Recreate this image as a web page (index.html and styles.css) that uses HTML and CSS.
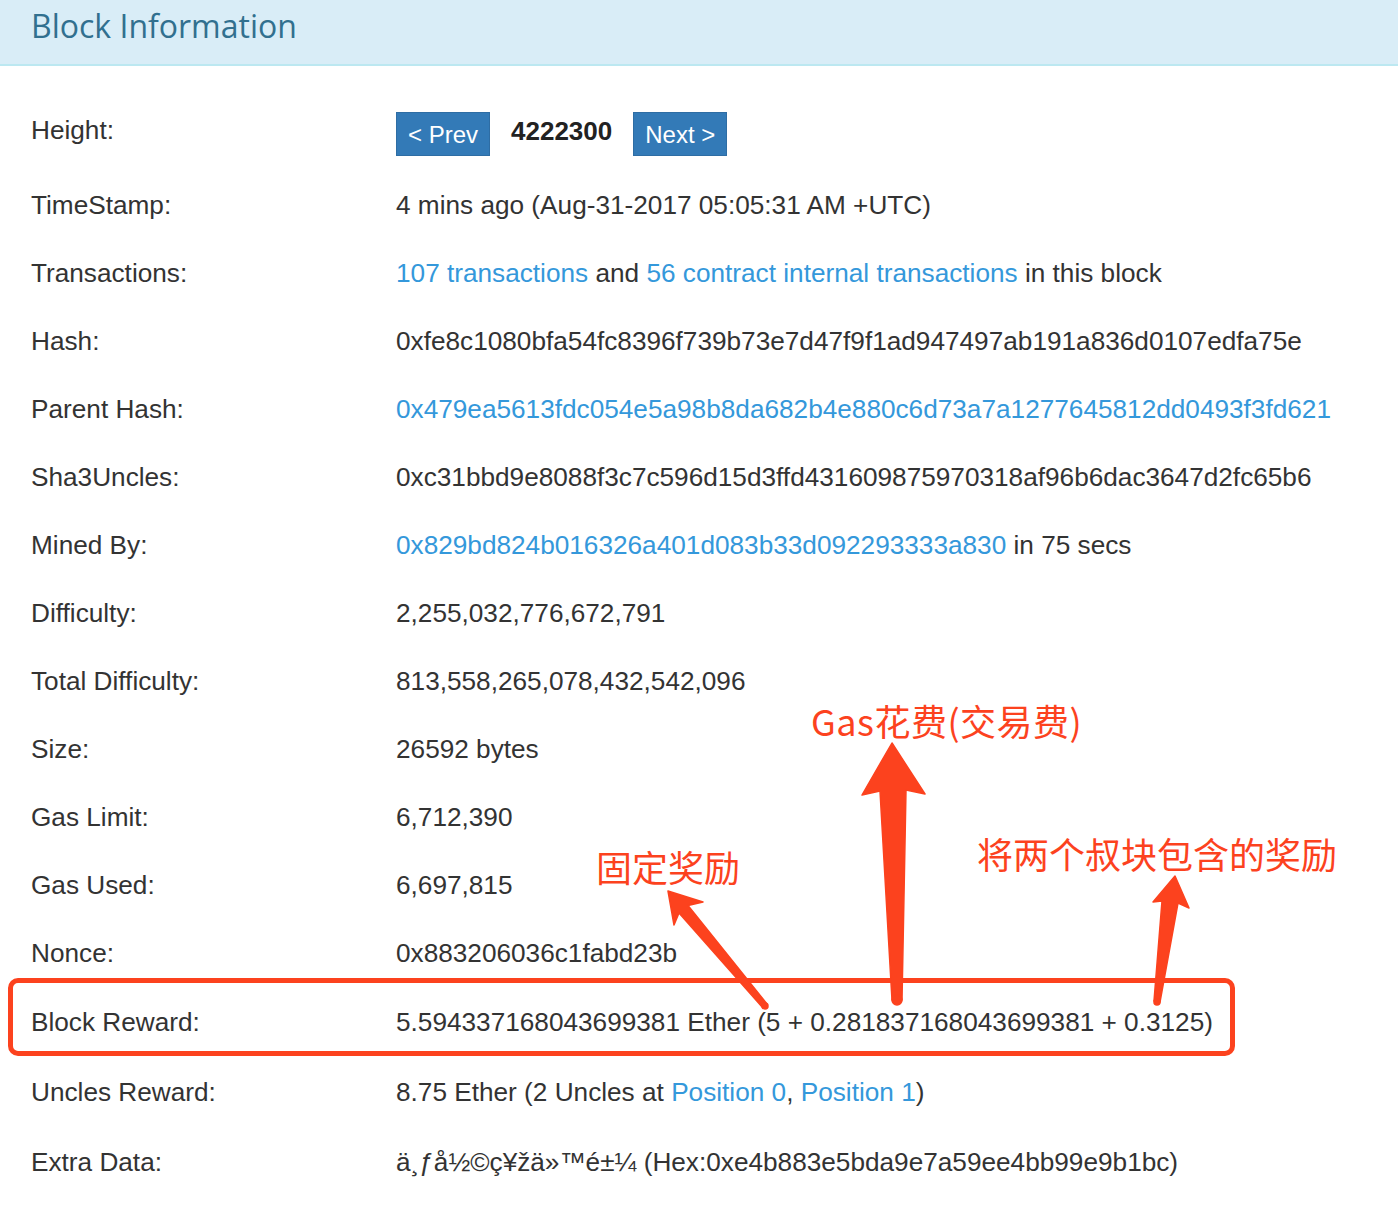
FILE: index.html
```html
<!DOCTYPE html>
<html lang="zh">
<head>
<meta charset="utf-8">
<title>Block Information</title>
<link rel="stylesheet" href="styles.css">
</head>
<body>
<div class="page">
  <div class="panel-heading">
    <h3 class="panel-title">Block Information</h3>
  </div>
  <div class="rows">
    <div class="row row-height">
      <div class="label">Height:</div>
      <div class="value nav">
        <a class="btn">&lt; Prev</a>
        <span class="blocknum">4222300</span>
        <a class="btn">Next &gt;</a>
      </div>
    </div>
    <div class="row"><div class="label">TimeStamp:</div><div class="value">4 mins ago (Aug-31-2017 05:05:31 AM +UTC)</div></div>
    <div class="row"><div class="label">Transactions:</div><div class="value"><a class="link">107 transactions</a> and <a class="link">56 contract internal transactions</a> in this block</div></div>
    <div class="row"><div class="label">Hash:</div><div class="value">0xfe8c1080bfa54fc8396f739b73e7d47f9f1ad947497ab191a836d0107edfa75e</div></div>
    <div class="row"><div class="label">Parent Hash:</div><div class="value"><a class="link">0x479ea5613fdc054e5a98b8da682b4e880c6d73a7a1277645812dd0493f3fd621</a></div></div>
    <div class="row"><div class="label">Sha3Uncles:</div><div class="value">0xc31bbd9e8088f3c7c596d15d3ffd431609875970318af96b6dac3647d2fc65b6</div></div>
    <div class="row"><div class="label">Mined By:</div><div class="value"><a class="link">0x829bd824b016326a401d083b33d092293333a830</a> in 75 secs</div></div>
    <div class="row"><div class="label">Difficulty:</div><div class="value">2,255,032,776,672,791</div></div>
    <div class="row"><div class="label">Total Difficulty:</div><div class="value">813,558,265,078,432,542,096</div></div>
    <div class="row"><div class="label">Size:</div><div class="value">26592 bytes</div></div>
    <div class="row"><div class="label">Gas Limit:</div><div class="value">6,712,390</div></div>
    <div class="row"><div class="label">Gas Used:</div><div class="value">6,697,815</div></div>
    <div class="row"><div class="label">Nonce:</div><div class="value">0x883206036c1fabd23b</div></div>
    <div class="row row-69"><div class="label">Block Reward:</div><div class="value">5.594337168043699381 Ether (5 + 0.281837168043699381 + 0.3125)</div></div>
    <div class="row row-71"><div class="label">Uncles Reward:</div><div class="value">8.75 Ether (2 Uncles at <a class="link">Position 0</a>, <a class="link">Position 1</a>)</div></div>
    <div class="row row-69"><div class="label">Extra Data:</div><div class="value">ä¸ƒå½©ç¥žä»™é±¼ (Hex:0xe4b883e5bda9e7a59ee4bb99e9b1bc)</div></div>
  </div>

  <div class="annotations">
    <div class="highlight-box"></div>
    <svg class="arrows" width="1398" height="1206" viewBox="0 0 1398 1206" xmlns="http://www.w3.org/2000/svg">
      <g fill="#fc421e" stroke="#fc421e" stroke-width="1.5" stroke-linejoin="round">
        <polygon points="668,891 703,902 688,905.5 767,1004 763,1008 679,913 674,925"/>
        <circle cx="765" cy="1006" r="3"/>
        <polygon points="892,743 925,794 906,790 902,1000 892,1000 880,791 862,795"/>
        <circle cx="897" cy="1000" r="5"/>
        <polygon points="1175,876 1189,908 1178,903 1160,1002 1154,1001 1162,901 1153,902"/>
        <circle cx="1157" cy="1002" r="3"/>
      </g>
    </svg>
    <div class="note note-gas">Gas花费(交易费)</div>
    <div class="note note-fixed">固定奖励</div>
    <div class="note note-uncle">将两个叔块包含的奖励</div>
  </div>
</div>
</body>
</html>
```
FILE: styles.css
```css
html, body {
  margin: 0;
  padding: 0;
  background: #ffffff;
}

.page {
  position: relative;
  width: 1398px;
  height: 1206px;
  overflow: hidden;
  font-family: "Liberation Sans", Arial, sans-serif;
  color: #333333;
}

.panel-heading {
  height: 64px;
  background: #d9edf7;
  border-bottom: 2px solid #bce8f1;
  box-sizing: content-box;
  padding-left: 31px;
}

.panel-title {
  margin: 0;
  padding-top: 4px;
  font-family: "Open Sans", sans-serif;
  font-weight: 400;
  font-size: 32px;
  line-height: 44px;
  color: #31708f;
}

.rows {
  display: flex;
  flex-direction: column;
  padding-top: 30px;
  padding-left: 31px;
}

.row {
  display: grid;
  grid-template-columns: 365px 1fr;
  align-items: center;
  height: 68px;
  font-size: 26.2px;
  line-height: 68px;
  white-space: nowrap;
}

.row-height {
  height: 75px;
}

.row-height .label {
  line-height: 30px;
  padding-bottom: 7px;
}

.row-69 { height: 69px; }
.row-71 { height: 71px; }

.nav {
  display: flex;
  align-items: center;
  gap: 21px;
  line-height: 30px;
}

.btn {
  display: inline-block;
  box-sizing: border-box;
  width: 94px;
  height: 44px;
  line-height: 43px;
  text-align: center;
  font-size: 24px;
  color: #ffffff;
  background: #337ab7;
  border: 1px solid #2e6da4;
}

.blocknum {
  font-weight: 700;
  font-size: 26px;
  color: #222222;
  padding-bottom: 5px;
}

.link {
  color: #3498db;
  text-decoration: none;
}

.annotations {
  position: absolute;
  left: 0;
  top: 0;
  width: 1398px;
  height: 1206px;
  pointer-events: none;
}

.arrows {
  position: absolute;
  left: 0;
  top: 0;
}

.highlight-box {
  position: absolute;
  left: 8px;
  top: 978px;
  width: 1227px;
  height: 78px;
  box-sizing: border-box;
  border: 5px solid #fc421e;
  border-radius: 10px;
}

.note {
  position: absolute;
  font-family: "Noto Sans CJK SC", "Noto Sans", sans-serif;
  font-weight: 400;
  font-size: 36px;
  line-height: 36px;
  color: #fc421e;
  white-space: nowrap;
}

.note-gas {
  left: 811px;
  top: 702px;
  letter-spacing: 0.5px;
}

.note-fixed {
  left: 596px;
  top: 848px;
}

.note-uncle {
  left: 977px;
  top: 835px;
}
```
